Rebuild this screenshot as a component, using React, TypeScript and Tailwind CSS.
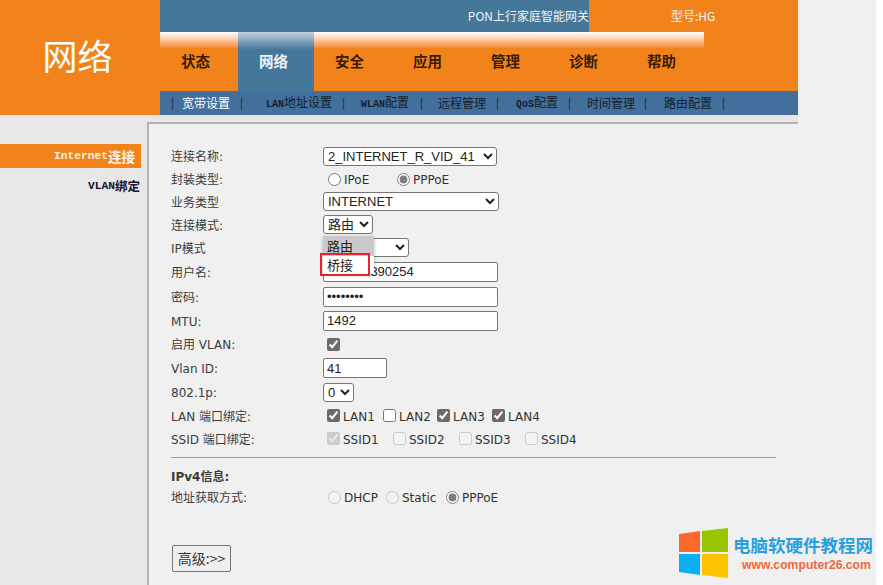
const CJK = "font-['Noto_Sans_CJK_SC','Noto_Sans',sans-serif]";
const LABEL = "font-['DejaVu_Sans','Noto_Sans_CJK_SC',sans-serif]";
const CTRL = "font-['Liberation_Sans','Noto_Sans_CJK_SC',sans-serif]";
const HALF = "font-['Liberation_Mono',monospace] font-bold";

const nav = ["状态", "网络", "安全", "应用", "管理", "诊断", "帮助"];
const sub = [
  { pre: "", t: "宽带设置", c: "ml-[8px] mr-[10px] text-white" },
  { pre: "LAN", t: "地址设置", c: "ml-[23px] mr-[10px]" },
  { pre: "WLAN", t: "配置", c: "ml-[16px] mr-[11px]" },
  { pre: "", t: "远程管理", c: "ml-[15px] mr-[10px]" },
  { pre: "QoS", t: "配置", c: "ml-[17px] mr-[10px]" },
  { pre: "", t: "时间管理", c: "ml-[16px] mr-[9px]" },
  { pre: "", t: "路由配置", c: "ml-[17px] mr-[10px]" },
];

function Row({ label, h, children, bold }: { label: string; h: string; children?: React.ReactNode; bold?: boolean }) {
  return (
    <div className={`flex items-center ${h}`}>
      <div className={`w-[152px] shrink-0 pt-[2px] text-[12px] text-[#3c3c3c] ${LABEL} ${bold ? "font-bold" : ""}`}>{label}</div>
      {children}
    </div>
  );
}

function Opt({ label, checked, disabled, type, cls }: { label: string; checked?: boolean; disabled?: boolean; type: string; cls: string }) {
  return (
    <label className={`flex items-center ${cls} text-[12px] text-[#333] ${LABEL}`}>
      <input
        type={type}
        defaultChecked={checked}
        disabled={disabled}
        className={`m-0 mr-[3px] h-[13px] w-[13px] ${type === "radio" ? "accent-[#7f7f7f]" : "accent-[#6b6b6b]"}`}
      />
      <span className="relative top-[1px] whitespace-nowrap">{label}</span>
    </label>
  );
}

const sel = `h-[19px] rounded-[3px] border border-[#767676] bg-white pl-0 text-[13px] text-[#222] ${CTRL}`;
const inp = `h-[20px] rounded-[2px] border border-[#767676] bg-white pl-[3px] text-[13px] text-[#222] outline-none ${CTRL}`;

export default function App() {
  return (
    <div className="relative h-[585px] w-[883px] overflow-hidden bg-white">
      <div className="h-[585px] w-[876px] bg-[#eff0ef]">
        {/* header */}
        <div className="flex h-[115px] w-[798px]">
          <div className={`flex w-[160px] items-center justify-center bg-[#f2831b] pb-[7px] pr-[5px] text-[35px] leading-none text-white ${CJK}`}>
            网络
          </div>
          <div className="flex w-[638px] flex-col">
            <div className={`flex h-[32px] text-[12px] text-[#eef3f6] ${CJK}`}>
              <div className="flex w-[429px] items-center justify-end bg-[#44779a]">PON上行家庭智能网关</div>
              <div className="flex w-[209px] items-center bg-[#f2831b] pl-[82px]">型号:HG</div>
            </div>
            <div className="flex h-[59px] bg-[#f2831b]">
              {nav.map((n, i) => (
                <div
                  key={n}
                  className={
                    i === 1
                      ? `flex w-[76px] items-center justify-center bg-gradient-to-b from-[#c4d3de] from-0% to-[#44779a] to-30% pb-[1px] pr-[5px] text-[14.5px] font-bold text-[#eef3f7] ${CJK}`
                      : `flex w-[78px] items-center justify-center bg-gradient-to-b from-[#fff] from-0% to-[#f2831b] to-28% pb-[1px] pr-[7px] text-[14.5px] font-bold text-[#3a1c05] ${CJK}`
                  }
                >
                  {n}
                </div>
              ))}
            </div>
            <div className={`flex h-[24px] items-center bg-[#426f9b] pb-[1px] pl-[11px] text-[12px] text-[#15202c] ${CJK}`}>
              <span className="text-[11px]">|</span>
              {sub.map((s) => (
                <div key={s.t + s.pre} className="flex items-center">
                  <span className={`whitespace-nowrap ${s.c}`}>
                    {s.pre && <span className={`text-[10px] ${HALF}`}>{s.pre}</span>}
                    {s.t}
                  </span>
                  <span className="text-[11px]">|</span>
                </div>
              ))}
            </div>
          </div>
        </div>

        {/* body */}
        <div className="flex h-[470px]">
          <div className="w-[147px] shrink-0 bg-[#e7e7e7] pt-[29px]">
            <div className={`flex h-[24px] w-[141px] items-center justify-end bg-[#f2831b] pr-[6px] text-[11.25px] text-[#fdf3e8] ${HALF}`}>
              Internet<span className={`text-[13.5px] ${CJK}`}>连接</span>
            </div>
            <div className={`flex h-[36px] w-[141px] items-center justify-end pr-[1px] text-[11.25px] text-[#1a1030] ${HALF}`}>
              VLAN<span className={`text-[12.5px] ${CJK}`}>绑定</span>
            </div>
          </div>
          <div className="flex-1">
            <div className="h-[7px] w-[651px] bg-[#e6e6e6]" />
            <div className="h-[2px] w-[651px] bg-[#b4b4b4]" />
            <div className="h-[461px] border-l-[2px] border-[#b4b4b4] pl-[22px] pr-[100px] pt-[20px]">
              <Row label="连接名称:" h="h-[24px]">
                <select className={`${sel} w-[174px]`} defaultValue="a">
                  <option value="a">2_INTERNET_R_VID_41</option>
                </select>
              </Row>
              <Row label="封装类型:" h="h-[22px]">
                <Opt type="radio" label="IPoE" cls="ml-[5px] w-[69px]" />
                <Opt type="radio" label="PPPoE" checked cls="" />
              </Row>
              <Row label="业务类型" h="h-[23px]">
                <select className={`${sel} w-[176px]`}>
                  <option>INTERNET</option>
                </select>
              </Row>
              <Row label="连接模式:" h="h-[23px]">
                <select className={`${sel} w-[50px]`}>
                  <option>路由</option>
                </select>
              </Row>
              <Row label="IP模式" h="h-[23px]">
                <select className={`${sel} w-[86px]`}>
                  <option></option>
                </select>
              </Row>
              <Row label="用户名:" h="h-[25px]">
                <input className={`${inp} w-[175px]`} defaultValue="138000390254" />
              </Row>
              <Row label="密码:" h="h-[25px]">
                <input type="password" className={`${inp} w-[175px]`} defaultValue="12345678" />
              </Row>
              <Row label="MTU:" h="h-[23px]">
                <input className={`${inp} w-[175px]`} defaultValue="1492" />
              </Row>
              <Row label="启用 VLAN:" h="h-[24px]">
                <input type="checkbox" defaultChecked className="m-0 ml-[4px] h-[13px] w-[13px] accent-[#6b6b6b]" />
              </Row>
              <Row label="Vlan ID:" h="h-[24px]">
                <input className={`${inp} w-[64px]`} defaultValue="41" />
              </Row>
              <Row label="802.1p:" h="h-[24px]">
                <select className={`${sel} w-[31px]`}>
                  <option>0</option>
                </select>
              </Row>
              <Row label="LAN 端口绑定:" h="h-[23px]">
                <Opt type="checkbox" label="LAN1" checked cls="ml-[4px] w-[56px]" />
                <Opt type="checkbox" label="LAN2" cls="w-[54px]" />
                <Opt type="checkbox" label="LAN3" checked cls="w-[55px]" />
                <Opt type="checkbox" label="LAN4" checked cls="" />
              </Row>
              <Row label="SSID 端口绑定:" h="h-[23px]">
                <Opt type="checkbox" label="SSID1" checked disabled cls="ml-[4px] w-[66px]" />
                <Opt type="checkbox" label="SSID2" disabled cls="w-[66px]" />
                <Opt type="checkbox" label="SSID3" disabled cls="w-[66px]" />
                <Opt type="checkbox" label="SSID4" disabled cls="" />
              </Row>
              <div className="mt-[7px] h-[1px] w-[605px] bg-[#7da3c0]" />
              <Row label="IPv4信息:" h="h-[36px]" bold />
              <Row label="地址获取方式:" h="h-[6px]">
                <Opt type="radio" label="DHCP" disabled cls="ml-[5px] w-[58px]" />
                <Opt type="radio" label="Static" disabled cls="w-[60px]" />
                <Opt type="radio" label="PPPoE" checked cls="" />
              </Row>
              <button className={`ml-[1px] mt-[45px] flex h-[27px] w-[59px] items-center justify-center rounded-[2px] border border-[#767676] bg-[#efefef] text-[14px] text-[#333] ${CJK}`}>
                高级:&gt;&gt;
              </button>
            </div>
          </div>
        </div>
      </div>

      {/* open dropdown list */}
      <div className={`absolute left-[323px] top-[236px] w-[51px] bg-[#f4f4f4] text-[13px] text-[#222] shadow-[0_1px_4px_rgba(0,0,0,0.25)] ${CJK}`}>
        <div className="flex h-[20px] items-center bg-[#c9c9c9] pl-[4px]">路由</div>
        <div className="flex h-[18px] items-center bg-white pl-[4px]">桥接</div>
      </div>
      <div className="absolute left-[320px] top-[253px] h-[23px] w-[50px] border-[2.5px] border-[#e4262c]" />

      {/* watermark */}
      <svg className="absolute left-[679px] top-[528px]" width="50" height="50" viewBox="0 0 50 50">
        <polygon points="0,6 21,3 21,24 0,24" fill="#fb6a2c" />
        <polygon points="23,3 49,0 49,24 23,24" fill="#98c400" />
        <polygon points="0,26 21,26 21,47 0,44" fill="#0baef0" />
        <polygon points="23,26 49,26 49,50 23,47" fill="#fdc300" />
      </svg>
      <div className={`absolute left-[733px] top-[533px] whitespace-nowrap text-[17.5px] font-bold leading-[24px] text-[#2a9fe0] ${CJK}`}>
        电脑软硬件教程网
      </div>
      <div className="absolute left-[742px] top-[557px] whitespace-nowrap font-['Liberation_Sans',sans-serif] text-[12.2px] font-bold leading-[16px] text-[#f0693c]">
        www.computer26.com
      </div>
    </div>
  );
}
